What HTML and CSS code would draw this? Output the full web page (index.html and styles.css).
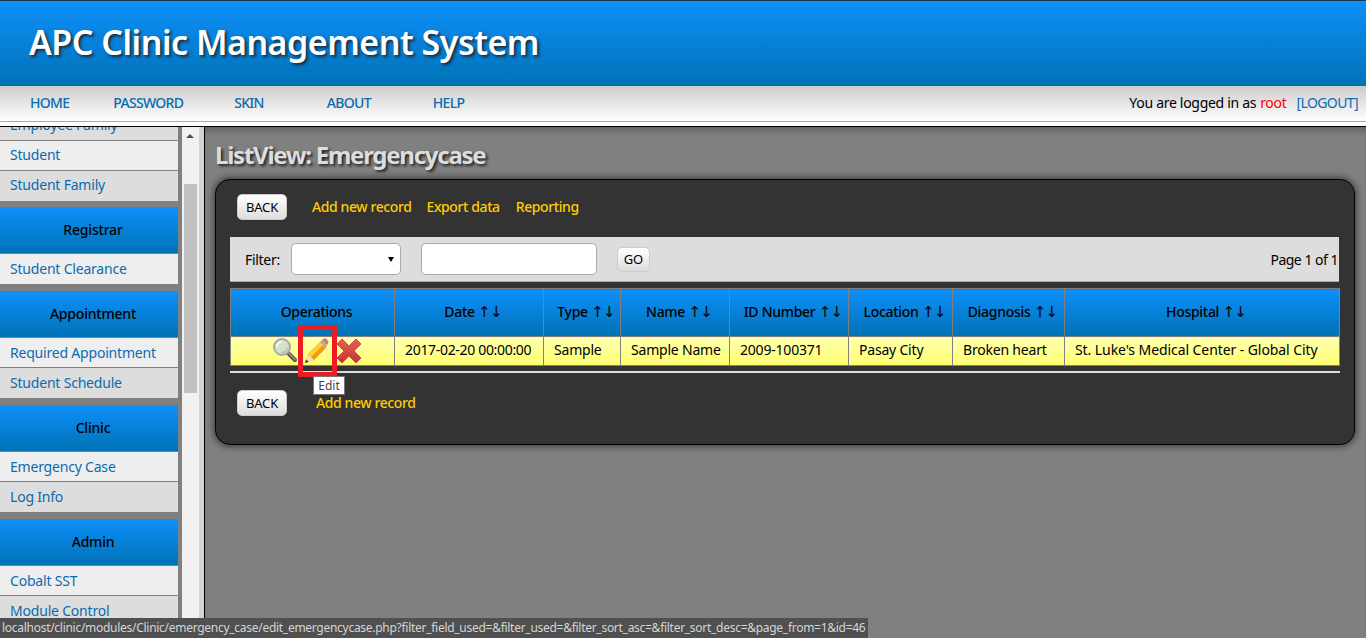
FILE: index.html
```html
<!DOCTYPE html>
<html lang="en">
<head>
    <meta charset="UTF-8">
    <title>APC Clinic Management System</title>
    <link rel="stylesheet" href="styles.css">
</head>
<body>
<header class="banner"><h1>APC Clinic Management System</h1></header>
<nav class="topnav">
    <a class="nav-home" href="#">HOME</a>
    <a class="nav-password" href="#">PASSWORD</a>
    <a class="nav-skin" href="#">SKIN</a>
    <a class="nav-about" href="#">ABOUT</a>
    <a class="nav-help" href="#">HELP</a>
    <div class="login"><span>You are logged in as</span><span class="user">root</span><a href="#">[LOGOUT]</a></div>
</nav>
<div class="content">
    <aside class="sidebar">
        <div class="menu">
            <ul class="menu-list first">
                <li><a href="#">Employee Family</a></li>
                <li><a href="#">Student</a></li>
                <li><a href="#">Student Family</a></li>
            </ul>
            <h3>Registrar</h3>
            <ul class="menu-list">
                <li><a href="#">Student Clearance</a></li>
            </ul>
            <h3>Appointment</h3>
            <ul class="menu-list">
                <li><a href="#">Required Appointment</a></li>
                <li><a href="#">Student Schedule</a></li>
            </ul>
            <h3>Clinic</h3>
            <ul class="menu-list">
                <li><a href="#">Emergency Case</a></li>
                <li><a href="#">Log Info</a></li>
            </ul>
            <h3>Admin</h3>
            <ul class="menu-list">
                <li><a href="#">Cobalt SST</a></li>
                <li><a href="#">Module Control</a></li>
            </ul>
        </div>
    </aside>
    <div class="scrollbar"><div class="scroll-up"></div><div class="scroll-thumb"></div></div>
    <main class="main">
        <h2>ListView: Emergencycase</h2>
        <section class="panel">
            <div class="actions">
                <button class="btn">BACK</button>
                <a href="#">Add new record</a>
                <a href="#">Export data</a>
                <a class="report" href="#">Reporting</a>
            </div>
            <div class="filter">
                <label>Filter:</label>
                <div class="select"></div>
                <input class="search" type="text">
                <button class="btn btn-go">GO</button>
                <span class="pages">Page 1 of 1</span>
            </div>
            <table class="grid">
                <thead>
                <tr>
                    <th class="c-ops">Operations</th>
                    <th class="c-date">Date <span class="sort">↑↓</span></th>
                    <th class="c-type">Type <span class="sort">↑↓</span></th>
                    <th class="c-name">Name <span class="sort">↑↓</span></th>
                    <th class="c-id">ID Number <span class="sort">↑↓</span></th>
                    <th class="c-loc">Location <span class="sort">↑↓</span></th>
                    <th class="c-diag">Diagnosis <span class="sort">↑↓</span></th>
                    <th>Hospital <span class="sort">↑↓</span></th>
                </tr>
                </thead>
                <tbody>
                <tr>
                    <td class="ops">
                        <svg class="ico-view" width="28" height="28" viewBox="0 0 28 28">
                            <path d="M15 15l8 8" stroke="#555" stroke-width="4" stroke-linecap="round"/>
                            <path d="M16 15.500l7 7" stroke="#999" stroke-width="1.200" stroke-linecap="round"/>
                            <circle cx="10" cy="10" r="8" fill="#d3e2cc" stroke="#a8a8a8" stroke-width="2"/>
                            <path d="M5 10a5 5 0 0 1 5-5" fill="none" stroke="#f4f8f0" stroke-width="2"/>
                            <path d="M9 15.500a5.500 5.500 0 0 0 6.500-5" fill="none" stroke="#aec3a6" stroke-width="1.500"/>
                        </svg>
                        <svg class="ico-edit" width="28" height="28" viewBox="0 0 28 28">
                            <path d="M6 17L18 5l6 6-12 12-9 3z" fill="#f39a12"/>
                            <path d="M6 17L18 5l3 3L9 20z" fill="#fdd32f"/>
                            <path d="M6 17l6 6-9 3z" fill="#f6dfb4"/>
                            <path d="M4.200 22.500L3 26l3.500-1.200z" fill="#333"/>
                            <path d="M20 3l1.500-1.200a2 2 0 0 1 2.500 0l2 2a2 2 0 0 1 0 2.700L25 8z" fill="#e0716f"/>
                            <path d="M18 5l2-2 5 5-1 3z" fill="#a9a9a9"/>
                        </svg>
                        <svg class="ico-del" width="26" height="28" viewBox="0 0 26 28">
                            <defs>
                                <linearGradient id="delfill" x1="0" y1="0" x2="0" y2="1">
                                    <stop offset="0" stop-color="#e4605b"/>
                                    <stop offset="1" stop-color="#c8322f"/>
                                </linearGradient>
                            </defs>
                            <path d="M6 2l7 7 7-7 5 5-7 7 7 7-5 5-7-7-7 7-5-5 7-7-7-7z" fill="url(#delfill)" stroke="#cf4a46" stroke-width="1" stroke-linejoin="round"/>
                        </svg>
                    </td>
                    <td class="wide-digits">2017-02-20 00:00:00</td>
                    <td>Sample</td>
                    <td>Sample Name</td>
                    <td>2009-100371</td>
                    <td>Pasay City</td>
                    <td>Broken heart</td>
                    <td class="long">St. Luke's Medical Center - Global City</td>
                </tr>
                </tbody>
            </table>
            <hr class="rule">
            <div class="actions bottom">
                <button class="btn">BACK</button>
                <a href="#">Add new record</a>
            </div>
        </section>
    </main>
</div>
<div class="marker"></div>
<div class="tooltip">Edit</div>
<div class="status">localhost/clinic/modules/Clinic/emergency_case/edit_emergencycase.php?filter_field_used=&amp;filter_used=&amp;filter_sort_asc=&amp;filter_sort_desc=&amp;page_from=1&amp;id=46</div>
</body>
</html>
```

FILE: styles.css
```css
*{
    box-sizing: border-box;
}
html,body{
    height: 100%;
}
body{
    margin: 0;
    overflow: hidden;
    display: flex;
    flex-direction: column;
    font-family: "Noto Sans", sans-serif;
    font-size: 14px;
    color: #000;
    background: #fff;
}
a{
    color: #0a6bb0;
    text-decoration: none;
}

/* banner */
.banner{
    height: 86px;
    flex: none;
    padding: 21px 0 0 29px;
    border-top: 1px solid #1c3347;
    background: linear-gradient(#0e90fb,#0072b5);
}
.banner h1{
    margin: 0;
    font-size: 34px;
    line-height: 40px;
    font-weight: 600;
    letter-spacing: -0.5px;
    color: #fff;
    text-shadow: 2px 2px 3px #1b2a38;
}

/* nav */
.topnav{
    height: 36px;
    flex: none;
    display: flex;
    align-items: center;
    padding-bottom: 2px;
    background: linear-gradient(#ccc,#fff);
    border-bottom: 1px solid #aaa;
    font-size: 14px;
    font-weight: 500;
    letter-spacing: -0.7px;
}
.topnav a{
    display: block;
}
.nav-home{ margin-left: 30px; }
.nav-password{ margin-left: 44px; }
.nav-skin{ margin-left: 51px; }
.nav-about{ margin-left: 63px; }
.nav-help{ margin-left: 62px; }
.login{
    margin-left: auto;
    padding-right: 8px;
    display: flex;
    font-weight: 400;
    letter-spacing: -0.3px;
}
.login .user{
    margin: 0 10px 0 4px;
    color: #f00;
}
.login a{
    font-weight: 400;
    letter-spacing: -0.6px;
}

.content{
    flex: 1;
    min-height: 0;
    display: flex;
    margin-top: 4px;
    border-top: 1px solid #000;
}

/* side menu */
.sidebar{
    width: 182px;
    flex: none;
    overflow: hidden;
    background: #808080;
}
.menu{
    width: 178px;
    margin-top: -16px;
    letter-spacing: -0.2px;
}
.menu h3{
    height: 47px;
    margin: 0;
    padding: 13px 0 0 8px;
    font-size: 14px;
    line-height: 20px;
    font-weight: 500;
    text-align: center;
    background: linear-gradient(#0e90fb,#0072b5);
    border-bottom: 1px solid #808080;
}
.menu-list{
    list-style: none;
    margin: 0 0 7px;
    padding: 0;
}
.menu-list.first{
    margin-bottom: 6px;
}
.menu-list li{
    height: 30px;
    padding-left: 10px;
    line-height: 30px;
    background: #eee;
    border-bottom: 1px solid #808080;
}
.menu-list li:nth-child(even){
    background: #ddd;
}
.menu-list.first li{
    line-height: 28px;
}
.menu-list.first li:nth-child(odd){
    background: #ddd;
}
.menu-list.first li:nth-child(even){
    background: #eee;
}
.menu-list li:last-child{
    border-bottom: 0;
}

.scrollbar{
    width: 23px;
    flex: none;
    background: linear-gradient(to right,#f1f1f1 17px,#d4d4d4 17px);
    border-right: 1px solid #000;
}
.scroll-up{
    height: 57px;
    position: relative;
}
.scroll-up:before{
    content: "";
    position: absolute;
    left: 4px;
    top: 7px;
    border-left: 4px solid transparent;
    border-right: 4px solid transparent;
    border-bottom: 4px solid #505050;
}
.scroll-thumb{
    height: 209px;
    margin-left: 2px;
    width: 13px;
    background: #c1c1c1;
}

/* main area */
.main{
    flex: 1;
    min-width: 0;
    padding: 12px 11px 0 10px;
    background: #808080;
    box-shadow: inset 0 8px 8px -6px #555;
}
.main h2{
    margin: 0 0 8px;
    font-size: 24px;
    line-height: 32px;
    font-weight: 700;
    letter-spacing: -1.25px;
    color: #ddd;
    text-shadow: 2px 2px 3px #222;
}
.panel{
    height: 266px;
    padding: 13px 15px 0 14px;
    background: #333;
    border: 1px solid #000;
    border-radius: 15px;
    box-shadow: 0 0 6px 2px #444;
}
.actions{
    display: flex;
    align-items: center;
    height: 28px;
    margin-left: 7px;
    font-weight: 500;
    letter-spacing: -0.4px;
}
.actions a{
    color: #fc0;
    margin: 0 0 2px 15px;
}
.actions .btn + a{
    margin-left: 25px;
}
.actions .report{
    margin-left: 16px;
}
.actions.bottom{
    margin-top: 16px;
}
.actions.bottom .btn + a{
    margin-left: 29px;
}
.btn{
    height: 26px;
    width: 50px;
    padding: 0;
    font: 13px "Noto Sans", sans-serif;
    letter-spacing: -0.2px;
    color: #000;
    background: linear-gradient(#fff,#ddd);
    border: 1px solid #ccc;
    border-radius: 5px;
}
.filter{
    display: flex;
    align-items: center;
    height: 45px;
    margin-top: 16px;
    padding: 0 1px 0 15px;
    background: #ddd;
    border-bottom: 1px solid #aaa;
    letter-spacing: -0.3px;
}
.select{
    width: 110px;
    height: 32px;
    margin-left: 11px;
    background: #fff;
    border: 1px solid #aaa;
    border-radius: 5px;
    position: relative;
}
.select:after{
    content: "";
    position: absolute;
    right: 6px;
    top: 13px;
    border-left: 3.500px solid transparent;
    border-right: 3.500px solid transparent;
    border-top: 5px solid #000;
}
.search{
    width: 176px;
    height: 32px;
    margin-left: 20px;
    background: #fff;
    border: 1px solid #aaa;
    border-radius: 5px;
}
.btn-go{
    width: 33px;
    height: 25px;
    margin-left: 20px;
}
.pages{
    margin-left: auto;
    letter-spacing: -0.5px;
}

/* list table */
.grid{
    width: 1110px;
    margin-top: 6px;
    border-collapse: collapse;
    table-layout: fixed;
    border: 1px solid #808080;
}
.grid th{
    height: 48px;
    padding: 0 0 2px 8px;
    font-weight: 500;
    letter-spacing: -0.3px;
    background: linear-gradient(#0e90fb,#0072b5);
    border: 1px solid #808080;
}
.sort{
    font-family: "DejaVu Sans", sans-serif;
    font-size: 15px;
    font-weight: 400;
    letter-spacing: -0.8px;
}
.grid td{
    height: 29px;
    padding: 0 0 3px 10px;
    white-space: nowrap;
    letter-spacing: -0.2px;
    background: linear-gradient(#ffffb0,#ffff70);
    border: 1px solid #808080;
}
.grid td.wide-digits{
    letter-spacing: -0.32px;
}
.grid td.long{
    letter-spacing: -0.08px;
}
.grid td.ops{
    padding: 0 0 0 41px;
    font-size: 0;
}
.ops svg{
    vertical-align: middle;
}
.ops .ico-edit{
    margin-left: 2px;
}
.ops .ico-del{
    margin-left: 6px;
}
.c-ops{ width: 164px; }
.c-date{ width: 149px; }
.c-type{ width: 77px; }
.c-name{ width: 109px; }
.c-id{ width: 119px; }
.c-loc{ width: 104px; }
.c-diag{ width: 112px; }
.rule{
    width: 1110px;
    height: 2px;
    margin: 5px 0 0;
    border: 0;
    background: #ddd;
}

/* things on top */
.marker{
    position: absolute;
    left: 298px;
    top: 325px;
    width: 39px;
    height: 52px;
    border: 5px solid #ed1c24;
}
.tooltip{
    position: absolute;
    left: 313px;
    top: 376px;
    width: 32px;
    height: 19px;
    font-size: 12px;
    line-height: 17px;
    text-align: center;
    color: #444;
    background: #fff;
    border: 1px solid #777;
}
.status{
    position: absolute;
    left: 0;
    bottom: 0;
    height: 20px;
    width: 868px;
    padding-left: 2px;
    font-size: 12px;
    letter-spacing: -0.28px;
    line-height: 20px;
    white-space: nowrap;
    color: #d5d5d5;
    background: #505050;
}
```
